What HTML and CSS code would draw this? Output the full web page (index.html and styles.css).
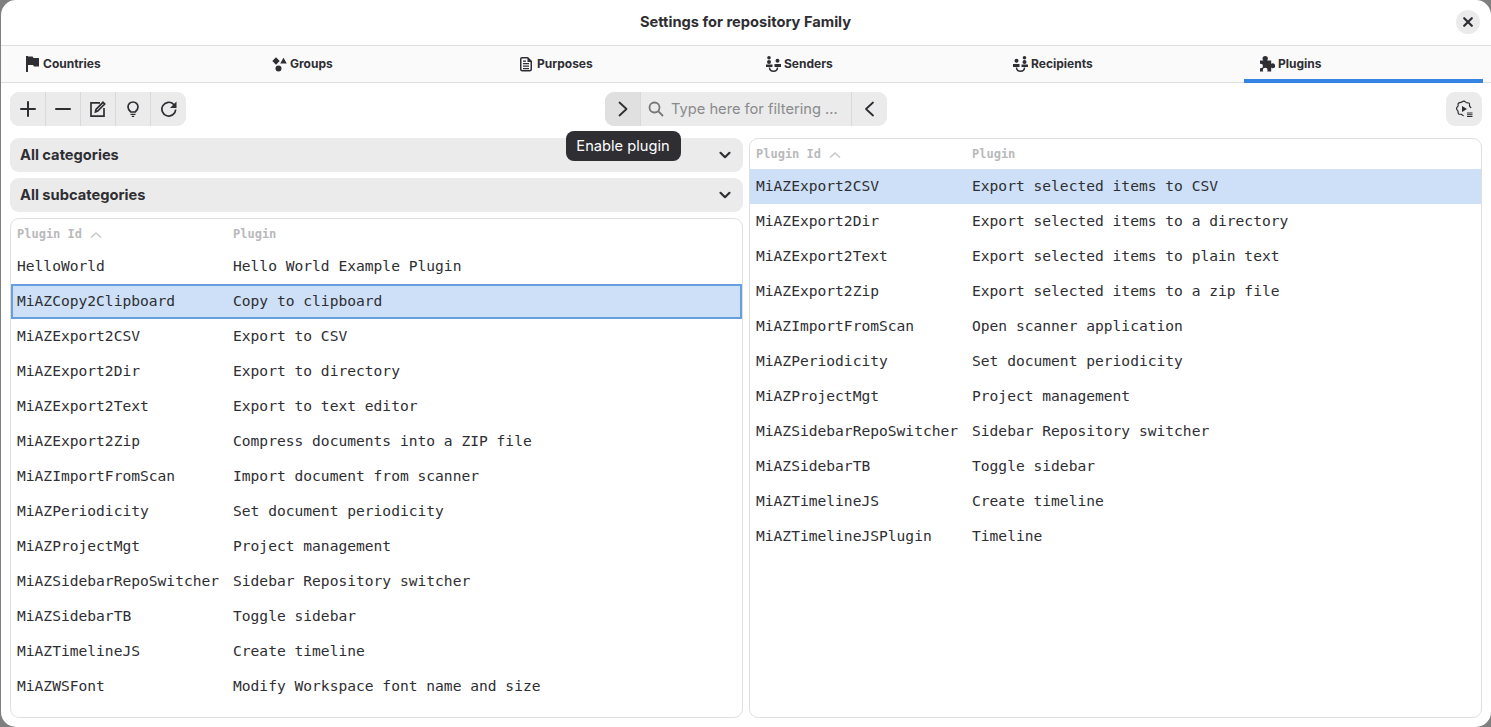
FILE: index.html
```html
<!DOCTYPE html>
<html lang="en">
<head>
<meta charset="utf-8">
<title>Settings for repository Family</title>
<link rel="stylesheet" href="styles.css">
</head>
<body>
<div class="window">
  <header class="titlebar">
    <span class="title">Settings for repository Family</span>
    <button class="close" aria-label="Close">
      <svg width="16" height="16" viewBox="0 0 16 16"><path d="M4.200 4.200l7.600 7.600M11.800 4.200l-7.600 7.600" class="st st-close"/></svg>
    </button>
  </header>
  <nav class="tabs">
    <div class="tab">
      <svg width="16" height="16" viewBox="0 0 16 16"><path class="fl" d="M1 0h2v16H1zM3 .5h4.500l1 1.500H14v8.500H9l-1-1.500H3z"/></svg>
      <span>Countries</span>
    </div>
    <div class="tab">
      <svg width="16" height="16" viewBox="0.500 0 16 16"><path class="fl" d="M4.500 1.300L8.200 5 4.500 8.700.8 5zM12 1.800L15.300 7.500H8.700z"/><circle class="fl" cx="7" cy="12.500" r="3"/></svg>
      <span>Groups</span>
    </div>
    <div class="tab">
      <svg width="16" height="16" viewBox="1 0 16 16"><path class="fl" fill-rule="evenodd" d="M4 1h6l4 4v8a2.500 2.500 0 0 1-2.500 2.500h-7A2.500 2.500 0 0 1 2 13V3a2 2 0 0 1 2-2zm0 1.500a.5.5 0 0 0-.5.5v10a1 1 0 0 0 1 1h7a1 1 0 0 0 1-1V6H9.500V2.500zM5 7h6v1.200H5zm0 2.500h6v1.200H5zM5 12h6v1.200H5zM5 4.500h3v1.200H5z"/></svg>
      <span>Purposes</span>
    </div>
    <div class="tab">
      <svg width="16" height="16" viewBox="0 0 16 16"><circle class="fl" cx="3" cy="1.800" r="1.800"/><circle class="fl" cx="3" cy="6" r="2"/><circle class="fl" cx="11.500" cy="4.800" r="2"/><path class="fl" d="M0 8.500h6.500v2.500H0zM8.500 8h6.500v3H8.500z"/><path class="st" d="M3.500 11.500c0 2.800 1.800 3.700 4 3.700s4-.9 4-3.700"/></svg>
      <span>Senders</span>
    </div>
    <div class="tab">
      <svg width="16" height="16" viewBox="0 0 16 16"><circle class="fl" cx="11.500" cy="1.800" r="1.800"/><circle class="fl" cx="3.500" cy="4.800" r="2"/><circle class="fl" cx="11.500" cy="6" r="2"/><path class="fl" d="M0 8h6.500v3H0zM8.500 8.500H15V11H8.500z"/><path class="st" d="M3.500 11.500c0 2.800 1.800 3.700 4 3.700s4-.9 4-3.700"/></svg>
      <span>Recipients</span>
    </div>
    <div class="tab active">
      <svg width="16" height="16" viewBox="1.500 0 16 16"><path class="fl" d="M1.200 4.500H4.800C4.300 3.800 4 3.300 4 2.700a2.700 2.700 0 0 1 5.400 0c0 .6-.3 1.100-.8 1.800h4.100v3.300c.6-.4 1-.6 1.400-.6a2.500 2.500 0 0 1 0 5c-.4 0-.8-.2-1.400-.6v4H8.600c.4-.7.5-1 .5-1.400a2.400 2.400 0 0 0-4.800 0c0 .4.100.7.500 1.400H.8v-3.900c.6.400 1 .6 1.400.6a2.300 2.300 0 0 0 0-4.600c-.4 0-.8.200-1.400.6z"/></svg>
      <span>Plugins</span>
    </div>
  </nav>
  <main class="content">
    <div class="toolbar">
      <div class="linked actions">
        <button class="btn" aria-label="Add"><svg width="16" height="16" viewBox="0 0 16 16"><path class="st st-thick" d="M8 1v14M1 8h14"/></svg></button>
        <button class="btn" aria-label="Remove"><svg width="16" height="16" viewBox="0 0 16 16"><path class="st st-thick" d="M1 8h14"/></svg></button>
        <button class="btn" aria-label="Edit"><svg width="16" height="16" viewBox="0 0 16 16"><path class="st st-edit" d="M10 1.800H1v13.400h13V7"/><path class="st st-edit" d="M5.500 10.800l.5-2.300L13 1.300l1.700 1.700-7 7z"/></svg></button>
        <button class="btn" aria-label="Hint"><svg width="16" height="16" viewBox="0 0 16 16"><path class="st st-edit" d="M5.800 11C4.400 9.800 3 8.500 3 6a5 5 0 0 1 10 0c0 2.500-1.400 3.800-2.800 5z"/><path class="fl" d="M5.500 12.800h5V14h-5zM6.800 14.800h2.400V16H6.800z"/></svg></button>
        <button class="btn" aria-label="Refresh"><svg width="16" height="16" viewBox="0 0 16 16"><path class="st st-edit" d="M14.700 8.500a6.900 6.900 0 1 1-2-5.200L14 5"/><path class="fl" d="M15.500 .5V7H9z"/></svg></button>
      </div>
      <div class="linked filter">
        <button class="btn btn-hover" aria-label="Enable"><svg width="16" height="16" viewBox="0 0 16 16"><path class="st st-edit2" d="M4.500 1.500L11.500 8l-7 6.500"/></svg></button>
        <div class="search">
          <svg width="16" height="16" viewBox="0 0 16 16"><circle class="st st-search" cx="6.500" cy="6.500" r="5"/><path class="st st-search" d="M10.200 10.200l4.800 4.800"/></svg>
          <span>Type here for filtering ...</span>
        </div>
        <button class="btn" aria-label="Disable"><svg width="16" height="16" viewBox="0 0 16 16"><path class="st st-edit2" d="M11 1.500L4 8l7 6.500"/></svg></button>
      </div>
      <button class="btn single" aria-label="Plugin actions"><svg width="18" height="18" viewBox="0 0 18 18"><path class="st st-gear" d="M16 8c-.3-.9-1.400-1.100-1.500-2.100-.1-1 .4-1.900-.3-2.700-.8-.8-1.800-.2-2.700-.5-1-.3-1.400-1.500-2.500-1.600S7 2.100 6 2.400c-1 .3-2.100 0-2.700.9s0 1.800-.3 2.700C2.600 6.900 1.500 7.400 1.500 8.600s1.200 1.500 1.500 2.500c.3 1-.2 2 .5 2.700.8.800 1.800.3 2.700.5 1 .3 1.400 1.300 2.500 1.300"/><path class="fl" d="M7 6l5 3-5 3zM12 12.500h5.500v1H12zM12 14.300h5.500v1H12zM12 16.100h5.500v1H12z"/></svg></button>
    </div>
    <div class="panes">
      <section class="pane">
        <div class="combo"><span class="label">All categories</span><svg width="16" height="16" viewBox="0 0 16 16"><path class="st st-chev" d="M3.500 5.800L8 10.200l4.500-4.400"/></svg></div>
        <div class="combo"><span class="label">All subcategories</span><svg width="16" height="16" viewBox="0 0 16 16"><path class="st st-chev" d="M3.500 5.800L8 10.200l4.500-4.400"/></svg></div>
        <div class="table">
          <div class="thead"><div class="col-a">Plugin Id<svg width="16" height="10" viewBox="0 0 16 10"><path class="st st-sort" d="M3 7.500L8 3l5 4.500"/></svg></div><div>Plugin</div></div>
          <div class="row"><div class="col-a">HelloWorld</div><div>Hello World Example Plugin</div></div>
          <div class="row focused"><div class="col-a">MiAZCopy2Clipboard</div><div>Copy to clipboard</div></div>
          <div class="row"><div class="col-a">MiAZExport2CSV</div><div>Export to CSV</div></div>
          <div class="row"><div class="col-a">MiAZExport2Dir</div><div>Export to directory</div></div>
          <div class="row"><div class="col-a">MiAZExport2Text</div><div>Export to text editor</div></div>
          <div class="row"><div class="col-a">MiAZExport2Zip</div><div>Compress documents into a ZIP file</div></div>
          <div class="row"><div class="col-a">MiAZImportFromScan</div><div>Import document from scanner</div></div>
          <div class="row"><div class="col-a">MiAZPeriodicity</div><div>Set document periodicity</div></div>
          <div class="row"><div class="col-a">MiAZProjectMgt</div><div>Project management</div></div>
          <div class="row"><div class="col-a">MiAZSidebarRepoSwitcher</div><div>Sidebar Repository switcher</div></div>
          <div class="row"><div class="col-a">MiAZSidebarTB</div><div>Toggle sidebar</div></div>
          <div class="row"><div class="col-a">MiAZTimelineJS</div><div>Create timeline</div></div>
          <div class="row"><div class="col-a">MiAZWSFont</div><div>Modify Workspace font name and size</div></div>
        </div>
      </section>
      <section class="pane">
        <div class="table">
          <div class="thead"><div class="col-a">Plugin Id<svg width="16" height="10" viewBox="0 0 16 10"><path class="st st-sort" d="M3 7.500L8 3l5 4.500"/></svg></div><div>Plugin</div></div>
          <div class="row selected"><div class="col-a">MiAZExport2CSV</div><div>Export selected items to CSV</div></div>
          <div class="row"><div class="col-a">MiAZExport2Dir</div><div>Export selected items to a directory</div></div>
          <div class="row"><div class="col-a">MiAZExport2Text</div><div>Export selected items to plain text</div></div>
          <div class="row"><div class="col-a">MiAZExport2Zip</div><div>Export selected items to a zip file</div></div>
          <div class="row"><div class="col-a">MiAZImportFromScan</div><div>Open scanner application</div></div>
          <div class="row"><div class="col-a">MiAZPeriodicity</div><div>Set document periodicity</div></div>
          <div class="row"><div class="col-a">MiAZProjectMgt</div><div>Project management</div></div>
          <div class="row"><div class="col-a">MiAZSidebarRepoSwitcher</div><div>Sidebar Repository switcher</div></div>
          <div class="row"><div class="col-a">MiAZSidebarTB</div><div>Toggle sidebar</div></div>
          <div class="row"><div class="col-a">MiAZTimelineJS</div><div>Create timeline</div></div>
          <div class="row"><div class="col-a">MiAZTimelineJSPlugin</div><div>Timeline</div></div>
        </div>
      </section>
    </div>
  </main>
  <div class="tooltip">Enable plugin</div>
</div>
</body>
</html>
```
FILE: styles.css
```css
* { box-sizing: border-box; }
html, body { margin: 0; height: 100%; }
body {
  background: #7f7f7f;
  font-family: Inter, "Liberation Sans", sans-serif;
  color: #2e2e33;
  overflow: hidden;
}
.window {
  position: relative;
  margin-left: 1px;
  width: 1490px;
  height: 727px;
  background: #fff;
  border-radius: 15px;
  display: flex;
  flex-direction: column;
  overflow: hidden;
}
.fl { fill: #2e2e33; }
.st { fill: none; stroke: #2e2e33; stroke-width: 1.5; }
.st-close { stroke-width: 2.2; stroke-linecap: round; }
.st-thick { stroke-width: 2; stroke-linecap: round; }
.st-edit { stroke-width: 1.7; }
.st-edit2 { stroke-width: 1.8; stroke-linecap: round; stroke-linejoin: round; }
.st-search { stroke: #77777b; stroke-width: 1.8; }
.st-gear { stroke-width: 1.2; }
.st-chev { stroke-width: 2.2; stroke-linecap: round; stroke-linejoin: round; }
.st-sort { stroke: #c8c8ca; stroke-width: 1.6; }

.titlebar {
  height: 46px;
  flex: none;
  display: flex;
  align-items: center;
  justify-content: center;
  position: relative;
  border-bottom: 1px solid #dfdfdf;
}
.title { font-size: 14.670px; font-weight: 700; margin-top: -2px; margin-right: 1px; }
.close {
  position: absolute;
  right: 11px;
  top: 10px;
  width: 24px;
  height: 24px;
  border: 0;
  padding: 4px;
  border-radius: 50%;
  background: #ebebeb;
  display: flex;
}
.tabs {
  height: 37px;
  flex: none;
  display: flex;
  gap: 8px;
  padding: 0 0 0 9px;
  background: #fafafa;
  border-bottom: 1px solid #dfdfdf;
}
.tab {
  flex: none;
  width: 239px;
  display: flex;
  align-items: center;
  gap: 2px;
  padding: 0 0 1px 15px;
  font-size: 12px;
  font-weight: 700;
  position: relative;
}
.tab.active::after {
  content: "";
  position: absolute;
  left: -1px;
  right: 1px;
  bottom: -1px;
  height: 4px;
  background: #3584e4;
}
.content {
  flex: 1;
  min-height: 0;
  display: flex;
  flex-direction: column;
  padding: 9px;
  gap: 12px;
}
.toolbar {
  height: 34px;
  flex: none;
  display: flex;
  position: relative;
}
.linked {
  display: flex;
  height: 34px;
  background: #ebebeb;
  border-radius: 9px;
  overflow: hidden;
}
.actions { width: 176px; }
.actions > .btn:first-child { width: 36px; padding-left: 1px; }
.btn {
  width: 35px;
  height: 34px;
  border: 0;
  padding: 0;
  background: #ebebeb;
  display: flex;
  align-items: center;
  justify-content: center;
  border-right: 1px solid #d9d9d9;
  flex: none;
}
.linked > .btn:last-child { border-right: 0; }
.btn-hover { background: #e0e0e0; width: 36px; }
.filter { width: 282px; margin-left: 419px; }
.search {
  flex: 1;
  display: flex;
  align-items: center;
  gap: 7px;
  padding-left: 7px;
  font-size: 14.670px;
  color: #8a8a8d;
  border-right: 1px solid #d9d9d9;
  white-space: nowrap;
}
.search span { padding-bottom: 1px; }
.single { width: 36px; border-right: 0; border-radius: 9px; margin-left: auto; }
.panes {
  flex: 1;
  min-height: 0;
  display: grid;
  grid-template-columns: 733px 733px;
  gap: 6px;
}
.pane {
  display: flex;
  flex-direction: column;
  gap: 6px;
  min-height: 0;
}
.combo {
  height: 34px;
  flex: none;
  background: #ebebeb;
  border-radius: 9px;
  display: flex;
  align-items: center;
  justify-content: space-between;
  padding: 0 10px;
  font-size: 14.670px;
  font-weight: 700;
}
.label { padding-bottom: 1px; }
.table {
  flex: 1;
  min-height: 0;
  border: 1px solid #dfdfdf;
  border-radius: 9px;
  overflow: hidden;
  font-family: "DejaVu Sans Mono", "Liberation Mono", monospace;
}
.thead {
  height: 30px;
  display: flex;
  align-items: center;
  padding-left: 6px;
  font-size: 12px;
  font-weight: 700;
  color: #b9b9bb;
}
.thead .col-a { display: flex; align-items: center; gap: 6px; }
.thead svg { margin-top: 2px; }
.col-a { width: 216px; flex: none; }
.row {
  height: 35px;
  display: flex;
  align-items: center;
  padding-left: 6px;
  padding-bottom: 2px;
  font-size: 14.600px;
  color: #2e2e33;
  white-space: nowrap;
}
.row.selected { background: #cde0f7; }
.row.focused { background: #cde0f7; box-shadow: inset 0 0 0 2px #659fdf; }
.tooltip {
  position: absolute;
  left: 565px;
  top: 131px;
  width: 115px;
  height: 30px;
  background: #2e2e33;
  color: #fff;
  border-radius: 8px;
  font-size: 14.670px;
  padding-bottom: 1px;
  padding-right: 1px;
  display: flex;
  align-items: center;
  justify-content: center;
}
```
